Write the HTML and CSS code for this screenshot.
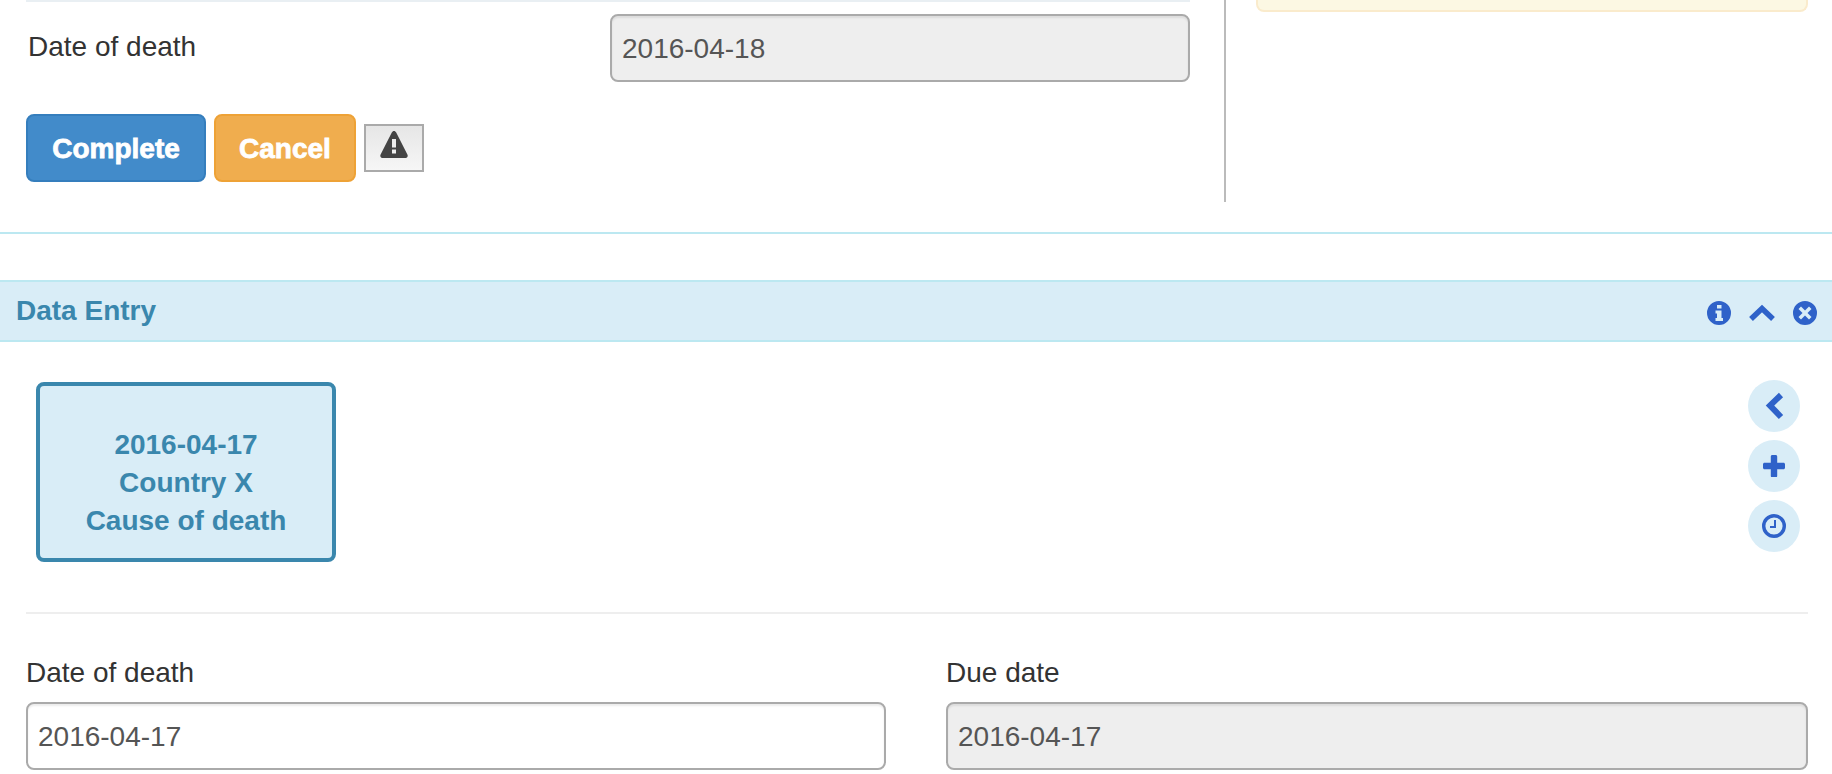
FILE: index.html
```html
<!DOCTYPE html>
<html lang="en">
<head>
    <meta charset="UTF-8">
    <title>Data Entry</title>
    <link rel="stylesheet" href="styles.css">
</head>
<body>
    <div class="upper">
        <div class="upper-form">
            <div class="form-row">
                <label class="row-label">Date of death</label>
                <input class="field field-disabled" type="text" value="2016-04-18" disabled>
            </div>
            <div class="actions">
                <button class="btn btn-primary">Complete</button>
                <button class="btn btn-warning">Cancel</button>
                <button class="btn-flag" aria-label="Warning">
                    <svg width="28" height="27" viewBox="0 0 28 27"><path fill="#444" fill-rule="evenodd" d="M14 0c1 0 1.700 0.600 2.200 1.500l11.200 22c0.800 1.600 0 3.500-1.700 3.500H2.300C0.600 27 -0.200 25.100 0.600 23.500l11.200-22C12.300 0.600 13 0 14 0zM12 8v8.500h4V8zM12 18.500v4h4v-4z"/></svg>
                </button>
            </div>
        </div>
        <div class="upper-side">
            <div class="alert-box"></div>
        </div>
    </div>

    <div class="panel-heading">
        <h3 class="panel-title">Data Entry</h3>
        <div class="panel-icons">
            <svg width="24" height="24" viewBox="0 0 24 24"><path fill="#2f62c9" fill-rule="evenodd" d="M12 0a12 12 0 1 0 0 24a12 12 0 0 0 0-24zM10 4h4.500v3.500H10zM8.500 9.500h6V17h1.500v3H8.500v-3H10v-4.500H8.500z"/></svg>
            <svg width="28" height="18" viewBox="0 0 28 18"><path fill="none" stroke="#2f62c9" stroke-width="5.500" stroke-linejoin="miter" d="M3 15L14 4.500L25 15"/></svg>
            <svg width="24" height="24" viewBox="0 0 24 24"><path fill="#2f62c9" fill-rule="evenodd" d="M12 0a12 12 0 1 0 0 24a12 12 0 0 0 0-24zM8 5.500l4 4l4-4l2.500 2.500l-4 4l4 4L16 18.500l-4-4l-4 4L5.500 16l4-4l-4-4z"/></svg>
        </div>
    </div>

    <div class="panel-body">
        <div class="event-strip">
            <div class="event-card">
                <div>2016-04-17</div>
                <div>Country X</div>
                <div>Cause of death</div>
            </div>
            <div class="round-buttons">
                <span class="round-btn">
                    <svg width="20" height="28" viewBox="0 0 20 28"><path fill="none" stroke="#2f62c9" stroke-width="6" d="M17 3L6 13.500L17 25"/></svg>
                </span>
                <span class="round-btn">
                    <svg width="22" height="22" viewBox="0 0 22 22"><path fill="#2f62c9" d="M7.800 1.500C7.800 0.700 8.500 0 9.300 0h3.400c0.800 0 1.500 0.700 1.500 1.500v6.300h6.300c0.800 0 1.500 0.700 1.500 1.500v3.400c0 0.800-0.700 1.500-1.500 1.500h-6.300v6.800c0 0.800-0.700 1.500-1.500 1.500H9.300c-0.800 0-1.500-0.700-1.500-1.500v-6.800H1.500C0.700 14.200 0 13.500 0 12.700V9.300c0-0.800 0.700-1.500 1.500-1.500h6.300z"/></svg>
                </span>
                <span class="round-btn">
                    <svg width="24" height="24" viewBox="0 0 24 24"><circle cx="12" cy="12" r="10.300" fill="none" stroke="#2f62c9" stroke-width="3.400"/><path fill="none" stroke="#2f62c9" stroke-width="2" d="M13 6v7H8"/></svg>
                </span>
            </div>
        </div>
        <hr class="divider">
        <div class="field-grid">
            <div class="field-group">
                <label class="field-label">Date of death</label>
                <input class="field" type="text" value="2016-04-17">
            </div>
            <div class="field-group">
                <label class="field-label">Due date</label>
                <input class="field field-disabled" type="text" value="2016-04-17" disabled>
            </div>
        </div>
    </div>
</body>
</html>
```

FILE: styles.css
```css
* {
    box-sizing: border-box;
}
html, body {
    height: 774px;
    overflow: hidden;
}
body {
    margin: 0;
    background: #fff;
    color: #333;
    font-family: "Liberation Sans", Arial, sans-serif;
    font-size: 28px;
    line-height: 40px;
}
.upper {
    display: flex;
    height: 234px;
    border-bottom: 2px solid #bce8f1;
}
.upper-form {
    width: 1226px;
    height: 202px;
    padding-left: 26px;
    padding-right: 34px;
    border-right: 2px solid #bbb;
}
.form-row {
    display: flex;
    justify-content: space-between;
    align-items: flex-start;
    height: 114px;
    padding-top: 12px;
    padding-left: 2px;
    border-top: 2px solid #e9eff3;
}
.row-label {
    padding-top: 13px;
}
.form-row .field {
    width: 580px;
}
.field {
    display: block;
    width: 100%;
    height: 68px;
    padding: 2px 10px 0;
    border: 2px solid #aaa;
    border-radius: 8px;
    background: #fff;
    color: #555;
    font-family: inherit;
    font-size: 28px;
    box-shadow: inset 0 2px 2px rgba(0, 0, 0, 0.075);
}
.field-disabled {
    background: #eee;
    opacity: 1;
}
.actions {
    display: flex;
    align-items: center;
    gap: 8px;
}
.btn {
    height: 68px;
    padding-top: 2px;
    border: 2px solid;
    border-radius: 8px;
    color: #fff;
    font-family: inherit;
    font-size: 28px;
    font-weight: bold;
    -webkit-text-stroke: 0.8px #fff;
}
.btn-primary {
    width: 180px;
    background: #428bca;
    border-color: #357ebd;
}
.btn-warning {
    width: 142px;
    background: #f0ad4e;
    border-color: #eea236;
}
.btn-flag {
    display: flex;
    align-items: center;
    justify-content: center;
    width: 60px;
    height: 48px;
    padding: 0 0 7px;
    border: 2px solid #aaa;
    background: linear-gradient(#e6e6e6, #f6f6f6);
}
.upper-side {
    flex: 1;
    padding-left: 30px;
    padding-right: 24px;
}
.alert-box {
    height: 12px;
    background: #fcf8e3;
    border: 2px solid #faebcc;
    border-top: 0;
    border-radius: 0 0 8px 8px;
}
.panel-heading {
    display: flex;
    justify-content: space-between;
    align-items: center;
    height: 62px;
    margin-top: 46px;
    padding: 0 15px 0 16px;
    background: #d9edf7;
    border-top: 2px solid #bce8f1;
    border-bottom: 2px solid #bce8f1;
}
.panel-title {
    margin: 0;
    color: #3a87ad;
    font-size: 28px;
    font-weight: bold;
    line-height: 40px;
}
.panel-icons {
    display: flex;
    align-items: center;
    gap: 17px;
    padding-top: 3px;
}
.panel-body {
    padding: 38px 24px 0 26px;
}
.event-strip {
    display: flex;
    justify-content: space-between;
    align-items: flex-start;
    height: 192px;
    padding: 0 8px 0 10px;
}
.event-card {
    width: 300px;
    height: 180px;
    margin-top: 2px;
    padding-top: 40px;
    background: #d9edf7;
    border: 4px solid #3a87ad;
    border-radius: 8px;
    color: #3a87ad;
    font-weight: bold;
    line-height: 38px;
    text-align: center;
}
.round-buttons {
    display: flex;
    flex-direction: column;
    gap: 8px;
}
.round-btn {
    display: flex;
    align-items: center;
    justify-content: center;
    width: 52px;
    height: 52px;
    border-radius: 50%;
    background: #d9edf7;
}
.divider {
    margin: 40px 0 0;
    border: 0;
    border-top: 2px solid #eee;
}
.field-grid {
    display: grid;
    grid-template-columns: 860px 862px;
    gap: 60px;
    margin-top: 39px;
}
.field-label {
    display: block;
    margin-bottom: 9px;
}
```
